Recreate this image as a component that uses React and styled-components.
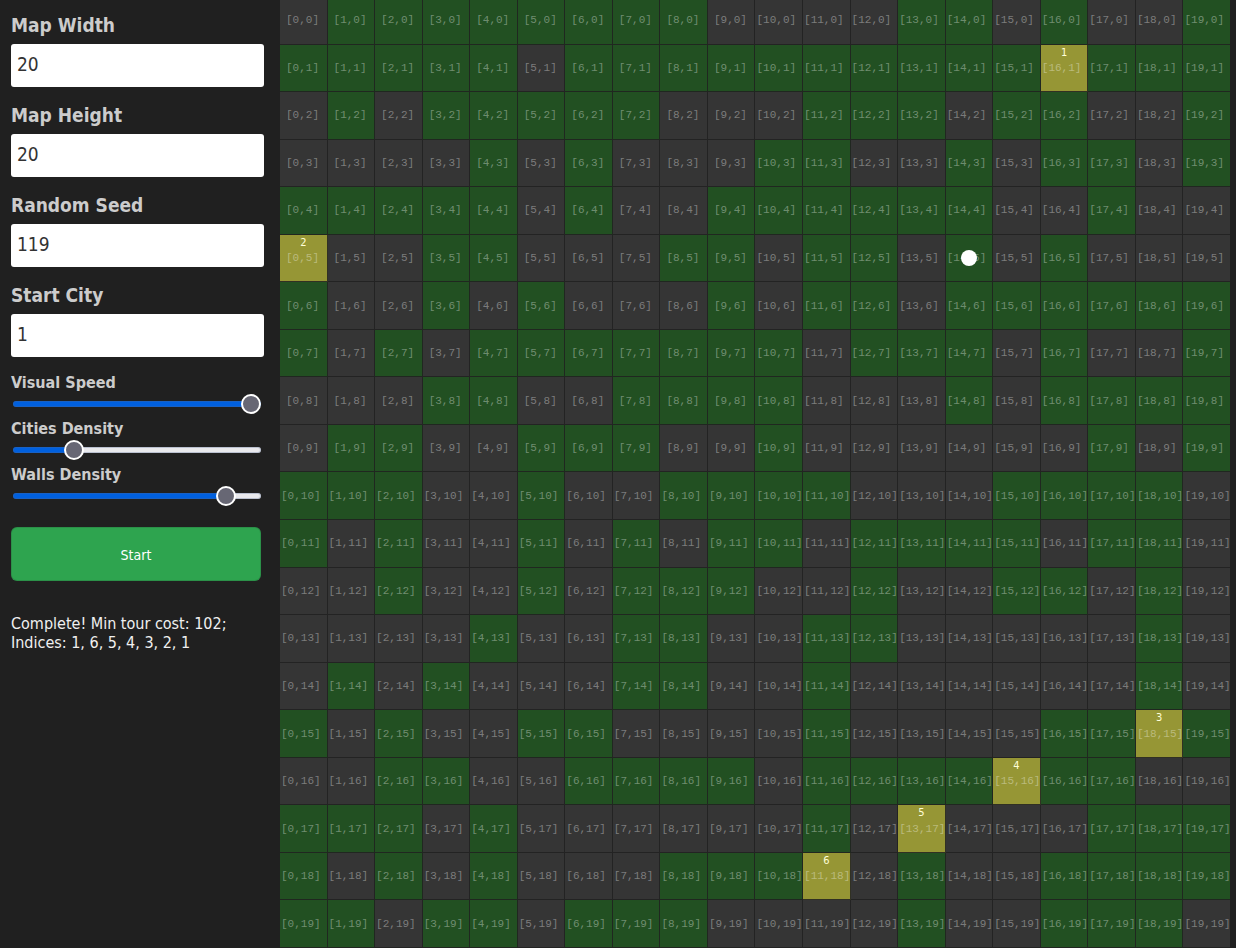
import React, { useState } from "react";
import styled, { createGlobalStyle } from "styled-components";

const GlobalStyle = createGlobalStyle`
  * {
    box-sizing: border-box;
  }

  body {
    margin: 0;
    background: #202020;
    color: #f0f0f0;
    font-family: Tahoma, "DejaVu Sans Condensed", "Noto Sans", sans-serif;
    font-size: 16px;
    overflow: hidden;
  }
`;

const Page = styled.div`
  display: flex;
  align-items: flex-start;
`;

const Sidebar = styled.form`
  flex: 0 0 280px;
  display: flex;
  flex-direction: column;
  padding: 12px 16px 0 11px;
`;

const Field = styled.div`
  display: flex;
  flex-direction: column;
  gap: 6px;
  margin-bottom: 15px;
`;

const FieldLabel = styled.label`
  color: #ccc;
  font-size: 19px;
  font-weight: bold;
  line-height: 26px;
`;

const NumberBox = styled.input`
  width: 100%;
  height: 43px;
  padding: 0 6px 4px;
  border: 0;
  border-radius: 3px;
  background: #fff;
  color: #333;
  font-family: inherit;
  font-size: 19px;
`;

const SliderRow = styled.div`
  display: flex;
  flex-direction: column;
  padding-right: 3px;
`;

const SliderLabel = styled.label`
  color: #ccc;
  font-weight: bold;
  line-height: 22px;
`;

const Slider = styled.input`
  appearance: none;
  height: 20px;
  margin: 0 0 4px 2px;
  background: transparent;

  &::-webkit-slider-runnable-track {
    height: 6px;
    border-radius: 3px;
    background: linear-gradient(
      to right,
      #0060df var(--fill),
      #e9e9ed var(--fill)
    );
    box-shadow: inset 0 0 0 1px rgba(80, 100, 140, 0.3);
  }

  &::-webkit-slider-thumb {
    appearance: none;
    width: 20px;
    height: 20px;
    margin-top: -7px;
    border: 2px solid #fff;
    border-radius: 50%;
    background: #676774;
  }
`;

const StartButton = styled.button`
  height: 54px;
  margin: 17px 3px 33px 0;
  padding: 2px 0 0;
  border: 1px solid rgba(27, 31, 35, 0.15);
  border-radius: 6px;
  background: #2ea44f;
  color: #fff;
  font-family: inherit;
  font-size: 14px;
`;

const Status = styled.p`
  margin: 0;
  line-height: 19px;
`;

const Viewport = styled.main`
  flex: 1;
  min-width: 0;
  margin-right: 6px;
  overflow: hidden;
`;

const Board = styled.div`
  display: grid;
  grid-template-columns: repeat(20, minmax(0, 1fr));
  grid-template-rows: repeat(20, minmax(0, 1fr));
  aspect-ratio: 1;
  margin: -3px -1px 0 0;
`;

const cellColors = { open: "#353535", wall: "#225022", city: "#969635" };

const Cell = styled.div`
  position: relative;
  display: flex;
  align-items: center;
  padding-left: ${({ $short }) => ($short ? "6px" : "1px")};
  border: solid rgba(32, 32, 32, 0.85);
  border-width: 0 1px 1px 0;
  background: ${({ $kind }) => cellColors[$kind]};
  color: rgba(255, 255, 255, 0.36);
  font-family: "Courier New", "Liberation Mono", monospace;
  font-size: 11px;
  line-height: 12px;
  white-space: nowrap;
`;

const CityNumber = styled.span`
  position: absolute;
  top: 2px;
  left: 0;
  right: 0;
  color: #ffffd8;
  font-family: Tahoma, "DejaVu Sans Condensed", "Noto Sans", sans-serif;
  text-align: center;
`;

const Traveller = styled.span`
  position: absolute;
  inset: 0;
  width: 16px;
  height: 16px;
  margin: auto;
  border-radius: 50%;
  background: #fff;
`;

const rows = [
  "01111111100001101001",
  "11111011111111111111",
  "01011111000111011001",
  "00001010001100101101",
  "11111010011111100100",
  "10011000110110101000",
  "10010100010110111111",
  "10101111111011101001",
  "00011001111000101111",
  "01100111001000000101",
  "11100100111100011110",
  "10100101011011110110",
  "00100101110010011010",
  "00001001100110000010",
  "01010001100100000010",
  "10100110000100001111",
  "00110011110111111100",
  "11101000000101000111",
  "10101000111101001111",
  "11011011100001001110",
];

const cities = {
  "16,1": 1,
  "0,5": 2,
  "18,15": 3,
  "15,16": 4,
  "13,17": 5,
  "11,18": 6,
};

const traveller = "14,5";

const fields = [
  { id: "width", label: "Map Width", value: "20" },
  { id: "height", label: "Map Height", value: "20" },
  { id: "seed", label: "Random Seed", value: "119" },
  { id: "start-city", label: "Start City", value: "1" },
];

const sliders = [
  { id: "speed", label: "Visual Speed", value: 10 },
  { id: "cities", label: "Cities Density", value: 3 },
  { id: "walls", label: "Walls Density", value: 9 },
];

const SLIDER_MIN = 1;
const SLIDER_MAX = 10;

function SliderControl({ id, label, value }) {
  const [current, setCurrent] = useState(value);
  const fill = ((current - SLIDER_MIN) / (SLIDER_MAX - SLIDER_MIN)) * 100;
  return (
    <SliderRow>
      <SliderLabel htmlFor={id}>{label}</SliderLabel>
      <Slider
        id={id}
        type="range"
        min={SLIDER_MIN}
        max={SLIDER_MAX}
        value={current}
        onChange={(event) => setCurrent(Number(event.target.value))}
        style={{ "--fill": `${fill}%` }}
      />
    </SliderRow>
  );
}

function MapCell({ x, y, wall }) {
  const key = `${x},${y}`;
  const city = cities[key];
  return (
    <Cell $kind={city ? "city" : wall ? "wall" : "open"} $short={x < 10 && y < 10}>
      {`[${key}]`}
      {city && <CityNumber>{city}</CityNumber>}
      {key === traveller && <Traveller />}
    </Cell>
  );
}

export default function App() {
  return (
    <>
      <GlobalStyle />
      <Page>
        <Sidebar onSubmit={(event) => event.preventDefault()}>
          {fields.map(({ id, label, value }) => (
            <Field key={id}>
              <FieldLabel htmlFor={id}>{label}</FieldLabel>
              <NumberBox id={id} type="text" inputMode="numeric" defaultValue={value} />
            </Field>
          ))}
          {sliders.map((slider) => (
            <SliderControl key={slider.id} {...slider} />
          ))}
          <StartButton type="submit">Start</StartButton>
          <Status>
            Complete! Min tour cost: 102;
            <br />
            Indices: 1, 6, 5, 4, 3, 2, 1
          </Status>
        </Sidebar>
        <Viewport>
          <Board>
            {rows.map((row, y) =>
              [...row].map((mark, x) => (
                <MapCell key={`${x},${y}`} x={x} y={y} wall={mark === "1"} />
              ))
            )}
          </Board>
        </Viewport>
      </Page>
    </>
  );
}
